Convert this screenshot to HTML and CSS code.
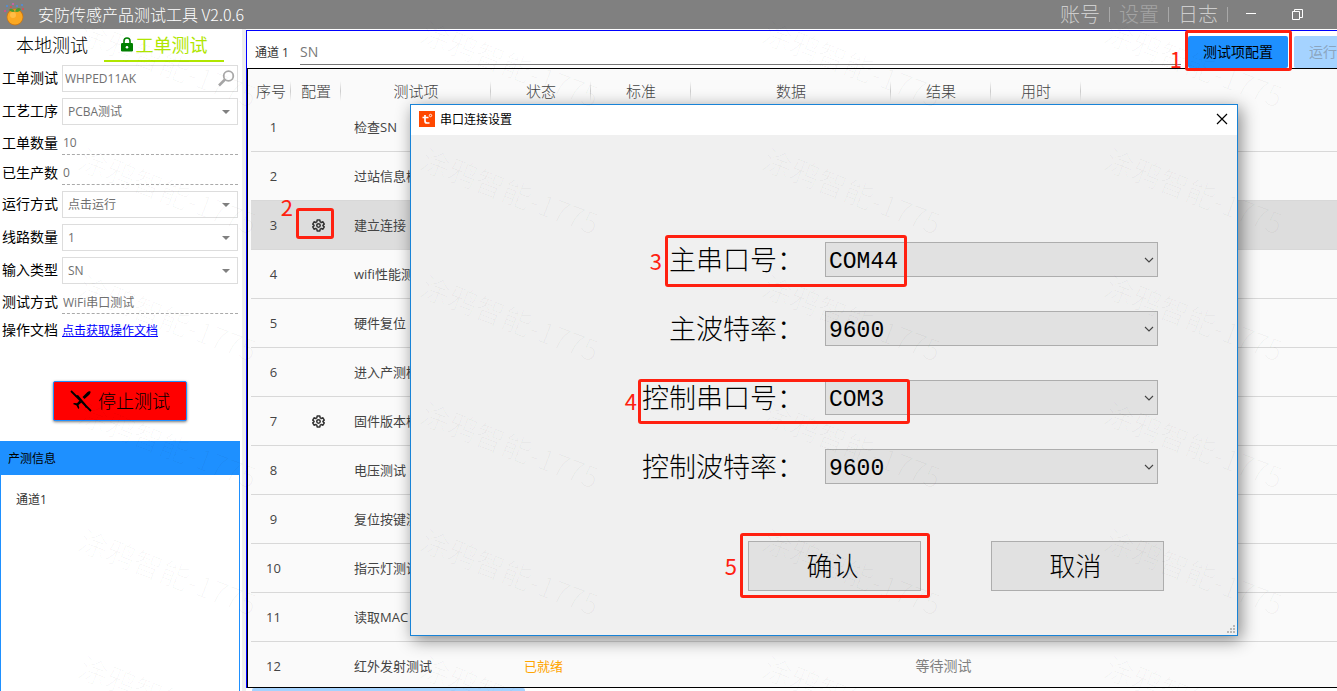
FILE: index.html
```
<!DOCTYPE html>
<html lang="zh-CN">
<head>
<meta charset="utf-8">
<title>安防传感产品测试工具</title>
<link rel="stylesheet" href="styles.css">
</head>
<body>
<svg class="defs" aria-hidden="true">
  <symbol id="gear" viewBox="0 0 24 24"><path fill="none" stroke="currentColor" stroke-width="2.8" stroke-linejoin="round" d="M9.5 2h5l.6 3.2 2 1.1 3.1-1.1 2.4 4.200-2.400 2.100v1l2.400 2.100-2.400 4.200-3.100-1.100-2 1.100-.6 3.200h-5l-.6-3.200-2-1.100-3.100 1.100-2.400-4.200 2.400-2.100v-1l-2.400-2.100 2.400-4.200 3.100 1.100 2-1.100z"/><circle cx="12" cy="12" r="3.200" fill="none" stroke="currentColor" stroke-width="2.800"/></symbol>
  <symbol id="chevron" viewBox="0 0 10 6"><path fill="none" stroke="currentColor" stroke-width="1.100" d="M1 1l4 4 4-4"/></symbol>
  <symbol id="caret" viewBox="0 0 8 4"><path fill="currentColor" d="M0 0h8L4 4z"/></symbol>
</svg>

<header class="titlebar">
  <svg class="logo" viewBox="0 0 22 24" aria-hidden="true">
    <circle cx="11" cy="15" r="8.400" fill="#c87818"/><circle cx="11" cy="15" r="7.600" fill="#fba822"/><circle cx="9" cy="13" r="3" fill="#ffbd45"/>
    <path d="M11 9.500c-2-3-5-3.500-6-1.500 2 2 4 2.500 6 1.500zM11 9.500c1-3.500 4-4.500 6-2.500-1 3-4 3.500-6 2.500z" fill="#4f9a2a"/>
    <circle cx="1" cy="9" r="1" fill="#e0488f"/><circle cx="3" cy="4" r="1" fill="#4a90e2"/><circle cx="7" cy="5" r="1" fill="#e0484f"/><circle cx="9" cy="2" r="1" fill="#d85bb0"/><circle cx="13" cy="4" r="1" fill="#4a90e2"/><circle cx="18" cy="3" r="1" fill="#4a90e2"/><circle cx="19" cy="7" r="1" fill="#e0484f"/>
  </svg>
  <h1 class="app-title">安防传感产品测试工具 V2.0.6</h1>
  <nav class="menu">
    <button class="menu-item" type="button">账号</button>
    <button class="menu-item" type="button" disabled>设置</button>
    <button class="menu-item" type="button">日志</button>
  </nav>
  <button class="window-button" type="button" aria-label="最小化"><svg width="10" height="10" viewBox="0 0 10 10"><path d="M0 3.500h10" stroke="#fff"/></svg></button>
  <button class="window-button" type="button" aria-label="还原"><svg width="11" height="11" viewBox="0 0 11 11" fill="none" stroke="#fff"><path d="M.5 2.500h7v8h-7zM2.500 2.500v-2h8v8h-3"/></svg></button>
</header>

<div class="workspace">
  <aside class="sidebar">
    <div class="tabs">
      <button class="tab" type="button">本地测试</button>
      <button class="tab tab-active" type="button"><svg width="12" height="15" viewBox="0 0 12 15" aria-hidden="true"><path d="M3 6V4a3 3 0 0 1 6 0v2" fill="none" stroke="#008000" stroke-width="1.600"/><rect y="6" width="12" height="8.500" rx="1.200" fill="#008000"/><circle cx="6" cy="10.200" r="1.300" fill="#fff"/></svg>工单测试</button>
    </div>
    <form class="order">
      <label for="order">工单测试</label>
      <span class="field boxed"><input id="order" value="WHPED11AK"><svg class="search" viewBox="0 0 17 17" aria-hidden="true"><circle cx="10.500" cy="6" r="4.800" fill="none" stroke="#a8a8a8" stroke-width="1.800"/><path d="M7 9.500L1 15.500" stroke="#a8a8a8" stroke-width="2.600"/></svg></span>
      <label for="process">工艺工序</label>
      <span class="field boxed"><select id="process"><option>PCBA测试</option></select><svg class="caret"><use href="#caret"/></svg></span>
      <label for="count">工单数量</label>
      <span class="field dashed"><input id="count" value="10" readonly></span>
      <label for="made">已生产数</label>
      <span class="field dashed"><input id="made" value="0" readonly></span>
      <label for="run">运行方式</label>
      <span class="field boxed"><select id="run"><option>点击运行</option></select><svg class="caret"><use href="#caret"/></svg></span>
      <label for="lines">线路数量</label>
      <span class="field boxed"><select id="lines"><option>1</option></select><svg class="caret"><use href="#caret"/></svg></span>
      <label for="input-type">输入类型</label>
      <span class="field boxed"><select id="input-type"><option>SN</option></select><svg class="caret"><use href="#caret"/></svg></span>
      <label for="mode">测试方式</label>
      <span class="field dashed"><input id="mode" value="WiFi串口测试" readonly></span>
      <span class="caption">操作文档</span>
      <a class="doc-link" href="#docs">点击获取操作文档</a>
    </form>
    <button class="stop" type="button"><svg width="22" height="22" viewBox="0 0 22 22" aria-hidden="true"><path d="M20.500 1.500c-1.500-.6-2.600.2-3.500 1.100L12.500 7l2 2L19 5c1-1 1.800-2.300 1.500-3.500zM8 5l7.500 9 1.500 3.500-1 .5-3.500-5.500-5-5L5 6zM9.500 10.500l2 2L8.500 15l.8 3-1 1-1.800-3.500L3 14l1-1 3 .3z"/><path d="M1 1l20 20" stroke="#000" stroke-width="1.800"/></svg>停止测试</button>
    <section class="info">
      <h2 class="info-title">产测信息</h2>
      <p class="info-body">通道1</p>
    </section>
  </aside>

  <main class="main">
    <div class="channel">
      <label for="sn">通道 1</label>
      <input class="sn" id="sn" placeholder="SN">
      <button class="action" type="button">测试项配置</button>
      <button class="action" type="button" disabled>运行</button>
    </div>
    <div class="results">
      <table class="grid">
        <colgroup><col class="w40"><col class="w50"><col class="w150"><col class="w100"><col class="w100"><col class="w200"><col class="w100"><col class="w90"><col></colgroup>
        <thead><tr><th>序号</th><th>配置</th><th>测试项</th><th>状态</th><th>标准</th><th>数据</th><th>结果</th><th>用时</th><th></th></tr></thead>
        <tbody>
          <tr><td>1</td><td></td><td>检查SN</td><td></td><td></td><td></td><td></td><td></td><td></td></tr>
          <tr><td>2</td><td></td><td>过站信息检查</td><td></td><td></td><td></td><td></td><td></td><td></td></tr>
          <tr class="selected"><td>3</td><td><svg class="gear"><use href="#gear"/></svg></td><td>建立连接</td><td></td><td></td><td></td><td></td><td></td><td></td></tr>
          <tr><td>4</td><td></td><td>wifi性能测试</td><td></td><td></td><td></td><td></td><td></td><td></td></tr>
          <tr><td>5</td><td></td><td>硬件复位</td><td></td><td></td><td></td><td></td><td></td><td></td></tr>
          <tr><td>6</td><td></td><td>进入产测模式</td><td></td><td></td><td></td><td></td><td></td><td></td></tr>
          <tr><td>7</td><td><svg class="gear"><use href="#gear"/></svg></td><td>固件版本检查</td><td></td><td></td><td></td><td></td><td></td><td></td></tr>
          <tr><td>8</td><td></td><td>电压测试</td><td></td><td></td><td></td><td></td><td></td><td></td></tr>
          <tr><td>9</td><td></td><td>复位按键测试</td><td></td><td></td><td></td><td></td><td></td><td></td></tr>
          <tr><td>10</td><td></td><td>指示灯测试</td><td></td><td></td><td></td><td></td><td></td><td></td></tr>
          <tr><td>11</td><td></td><td>读取MAC</td><td></td><td></td><td></td><td></td><td></td><td></td></tr>
          <tr><td>12</td><td></td><td>红外发射测试</td><td class="ready">已就绪</td><td></td><td></td><td class="waiting">等待测试</td><td></td><td></td></tr>
        </tbody>
      </table>
    </div>
    <div class="scroll"></div>
  </main>
</div>

<section class="dialog" role="dialog" aria-labelledby="dialog-title">
  <header class="dialog-bar">
    <svg width="16" height="16" viewBox="0 0 16 16" aria-hidden="true"><rect width="16" height="16" fill="#ff4800"/><path d="M6 4v6Q6 12 8 12H10.500M3.500 6.500H9.500" fill="none" stroke="#fff" stroke-width="1.700"/><circle cx="11.500" cy="4.500" r="1.200" fill="none" stroke="#fff" stroke-width=".9"/></svg>
    <h2 class="dialog-title" id="dialog-title">串口连接设置</h2>
    <button class="close" type="button" aria-label="关闭"><svg width="12" height="12" viewBox="0 0 12 12"><path d="M1 1l10 10M11 1L1 11" stroke="#000" stroke-width="1.200"/></svg></button>
  </header>
  <form class="serial">
    <label for="main-port">主串口号：</label>
    <span class="combo"><select id="main-port"><option>COM44</option></select><svg class="chevron"><use href="#chevron"/></svg></span>
    <label for="main-baud">主波特率：</label>
    <span class="combo"><select id="main-baud"><option>9600</option></select><svg class="chevron"><use href="#chevron"/></svg></span>
    <label for="ctl-port">控制串口号：</label>
    <span class="combo"><select id="ctl-port"><option>COM3</option></select><svg class="chevron"><use href="#chevron"/></svg></span>
    <label for="ctl-baud">控制波特率：</label>
    <span class="combo"><select id="ctl-baud"><option>9600</option></select><svg class="chevron"><use href="#chevron"/></svg></span>
  </form>
  <div class="dialog-actions">
    <button class="push" type="button">确认</button>
    <button class="push" type="button">取消</button>
  </div>
  <svg class="grip" viewBox="0 0 8 8" aria-hidden="true" fill="#b8b8b8"><path d="M6 0h2v2H6zM3 3h2v2H3zM6 3h2v2H6zM0 6h2v2H0zM3 6h2v2H3zM6 6h2v2H6z"/></svg>
</section>

<div class="watermarks" aria-hidden="true">
  <span>涂鸦智能-1775</span><span>涂鸦智能-1775</span><span>涂鸦智能-1775</span><span>涂鸦智能-1775</span>
  <span>涂鸦智能-1775</span><span>涂鸦智能-1775</span><span>涂鸦智能-1775</span><span>涂鸦智能-1775</span>
  <span>涂鸦智能-1775</span><span>涂鸦智能-1775</span><span>涂鸦智能-1775</span><span>涂鸦智能-1775</span>
  <span>涂鸦智能-1775</span><span>涂鸦智能-1775</span><span>涂鸦智能-1775</span><span>涂鸦智能-1775</span>
  <span>涂鸦智能-1775</span><span>涂鸦智能-1775</span><span>涂鸦智能-1775</span><span>涂鸦智能-1775</span>
  <span>涂鸦智能-1775</span><span>涂鸦智能-1775</span><span>涂鸦智能-1775</span><span>涂鸦智能-1775</span>
</div>

<div class="mark mark-1"><b>1</b></div>
<div class="mark mark-2"><b>2</b></div>
<div class="mark mark-3"><b>3</b></div>
<div class="mark mark-4"><b>4</b></div>
<div class="mark mark-5"><b>5</b></div>
</body>
</html>
```
FILE: styles.css
```
* { box-sizing: border-box; }
body {
  margin: 0; height: 100vh; overflow: hidden; position: relative;
  display: flex; flex-direction: column; background: #fff; color: #000;
  font: 14px/20px "Open Sans", "Noto Sans CJK SC", sans-serif;
}
button, input, select { font: inherit; color: inherit; margin: 0; padding: 0; border: 0; background: none; border-radius: 0; outline: 0; }
select { appearance: none; }
h1, h2, p { margin: 0; font-weight: 400; }
svg { display: block; flex: none; }
.defs { position: absolute; width: 0; height: 0; }

.titlebar { flex: none; height: 29px; display: flex; align-items: center; padding: 0 17px 2px 4px; background: #808080; color: #fff; }
.logo { width: 22px; height: 24px; }
.app-title { margin: 0 auto 0 12px; font-size: 16px; font-family: "Noto Sans CJK SC", sans-serif; font-weight: 300; }
.menu { display: flex; align-items: center; padding-top: 2px; }
.menu-item { width: 59px; height: 15px; border-right: 1px solid #a8a8a8; font-size: 20px; line-height: 15px; color: #ccc; font-weight: 300; }
.menu-item:disabled { color: #a4a4a4; }
.window-button { width: 46px; height: 27px; padding-top: 2px; display: flex; align-items: center; justify-content: center; }

.workspace { flex: 1; min-height: 0; display: flex; }
.sidebar { width: 240px; flex: none; display: flex; flex-direction: column; }
.tabs { display: flex; height: 33px; }
.tab { width: 104px; padding-bottom: 2px; font-size: 18px; font-weight: 300; }
.tab-active { width: 120px; padding-bottom: 0; display: flex; align-items: center; justify-content: center; gap: 3px; border-bottom: 2px solid #b0e600; color: #b0e600; font-weight: 400; }
.order { display: grid; grid-template-columns: 56px 1fr; column-gap: 4px; row-gap: 6px; align-items: center; padding: 3px 2px 0; }
.order label, .caption { padding-bottom: 1px; }
.field { position: relative; display: flex; align-items: center; color: #707070; font-size: 12px; }
.field input, .field select { width: 100%; height: 100%; }
.boxed { height: 27px; border: 1px solid #ddd; }
.boxed input { padding-left: 2px; }
.boxed select { padding-left: 5px; }
.dashed { height: 24px; border-bottom: 1px dashed #aaa; padding-left: 1px; }
.search { position: absolute; right: 2px; top: 4px; width: 17px; height: 17px; }
.caret { position: absolute; right: 7px; top: 11px; width: 8px; height: 4px; color: #808080; }
.doc-link { font-size: 12px; color: #0000ff; }
.stop { align-self: center; width: 134px; height: 40px; margin: 40px 0 20px; display: flex; align-items: center; justify-content: center; gap: 6px; border: 1px solid #1e90ff; border-radius: 2px; background: #f00; box-shadow: 0 1px 3px #0008; font-size: 18px; font-weight: 300; }
.info { flex: 1; border: 1px solid #1e90ff; border-width: 0 1px; font-size: 12px; }
.info-title { padding: 8px 7px 6px; background: #1e90ff; font-size: 12px; }
.info-body { padding: 15px; color: #333; }

.main { flex: 1; min-width: 0; margin-left: 2px; border-left: 4px solid #eee; display: flex; flex-direction: column; padding-top: 1px; }
.channel { flex: none; height: 38px; display: flex; align-items: flex-end; border: 1px solid #00f; border-width: 1px 0 0 1px; padding-left: 8px; font-size: 12px; overflow: hidden; }
.channel label { width: 45px; padding-bottom: 5px; color: #333; white-space: nowrap; }
.sn { flex: 1; min-width: 0; height: 27px; margin: 0 7px 3px 0; border-bottom: 1px solid #777; font-size: 14px; }
.sn::placeholder { color: #777; opacity: 1; }
.action { flex: none; width: 100px; height: 32px; margin-right: 6px; border-radius: 2px; background: #1e90ff; font-size: 14px; }
.action:disabled { width: 43px; margin-right: 0; border-radius: 2px 0 0 2px; padding-left: 15px; background: #a5d3ff; color: #8ba5bf; text-align: left; white-space: nowrap; }
.results { flex: 1; min-height: 0; overflow: hidden; border: 1px solid #000; border-right: 0; box-shadow: -1px 0 #00f; margin-left: 1px; padding-left: 3px; background: #fafafa; }
.grid { width: 100%; table-layout: fixed; border-spacing: 0; font-size: 13px; color: #444; }
.w40 { width: 40px; } .w50 { width: 50px; } .w90 { width: 90px; } .w100 { width: 100px; } .w150 { width: 150px; } .w200 { width: 200px; }
th { height: 34px; padding: 10px 0 0; font-size: 15px; font-weight: 300; color: #444; background: linear-gradient(#fafafa, #ccc, #fafafa) right 12px / 1px 20px no-repeat; }
th:last-child { background: none; }
td { height: 49px; padding: 0 0 0 5px; border-bottom: 1px solid #d8d8d8; text-align: center; white-space: nowrap; }
td:nth-child(3) { padding-left: 13px; text-align: left; }
.selected td { background: #ddd; }
.gear { width: 13px; height: 13px; margin: auto; color: #333; }
.grid .ready { color: #ffa500; }
.grid .waiting { color: #808080; font-size: 14px; }
.scroll { flex: none; width: 273px; height: 3px; margin-left: 6px; border-radius: 2px 2px 0 0; background: #a5d3ff; }

.dialog { position: absolute; left: 410px; top: 104px; width: 828px; background: #f0f0f0; border: 1px solid #1883d7; box-shadow: 3px 4px 16px #0007; font-family: SimSun, "Noto Sans CJK SC", sans-serif; font-weight: 300; }
.dialog-bar { height: 30px; display: flex; align-items: center; padding: 0 9px 2px 8px; background: #fff; }
.dialog-title { margin: 0 auto 0 5px; font-size: 12px; }
.close svg { width: 12px; height: 12px; }
.serial { display: grid; grid-template-columns: 395px 333px; column-gap: 19px; row-gap: 34px; margin-top: 107px; align-items: center; }
.serial label { padding: 0 2px 2px 0; font-size: 27px; line-height: 33px; text-align: right; }
.combo { position: relative; display: block; height: 35px; }
.combo select { width: 100%; height: 100%; padding: 4px 0 0 3px; border: 1px solid #adadad; background: #e1e1e1; font-family: "Liberation Mono", monospace; font-size: 23px; }
.chevron { position: absolute; right: 4px; top: 15px; width: 10px; height: 6px; color: #444; }
.dialog-actions { display: flex; gap: 70px; padding: 57px 0 44px 337px; }
.push { width: 173px; height: 50px; padding: 0 4px 3px 0; border: 1px solid #adadad; background: #e1e1e1; font-size: 26px; font-weight: 300; }
.grip { position: absolute; right: 2px; bottom: 2px; width: 8px; height: 8px; }

.watermarks { position: absolute; inset: 0; overflow: hidden; pointer-events: none; display: grid; grid-template-columns: repeat(4, 342px); grid-auto-rows: 127px; padding: 13px 0 0 81px; color: rgba(0, 0, 0, 0.03); font: 300 29px/32px "Noto Sans CJK SC", sans-serif; }
.watermarks span { white-space: nowrap; transform: rotate(21deg); transform-origin: 0 16px; }

.mark { position: absolute; border: 3px solid #ff2010; border-radius: 3px; pointer-events: none; }
.mark b { position: absolute; right: 100%; font: 400 22px/22px "Noto Sans CJK SC", sans-serif; color: #ff2010; margin-right: 6px; }
.mark-1 { left: 1185px; top: 30px; width: 107px; height: 41px; }
.mark-1 b { top: 14px; }
.mark-2 { left: 296px; top: 208px; width: 38px; height: 31px; }
.mark-2 b { top: -16px; }
.mark-3 { left: 665px; top: 235px; width: 242px; height: 52px; }
.mark-3 b { top: 11px; }
.mark-4 { left: 638px; top: 379px; width: 272px; height: 45px; }
.mark-4 b { top: 7px; margin-right: 4px; }
.mark-5 { left: 740px; top: 533px; width: 190px; height: 65px; }
.mark-5 b { top: 18px; }
```
